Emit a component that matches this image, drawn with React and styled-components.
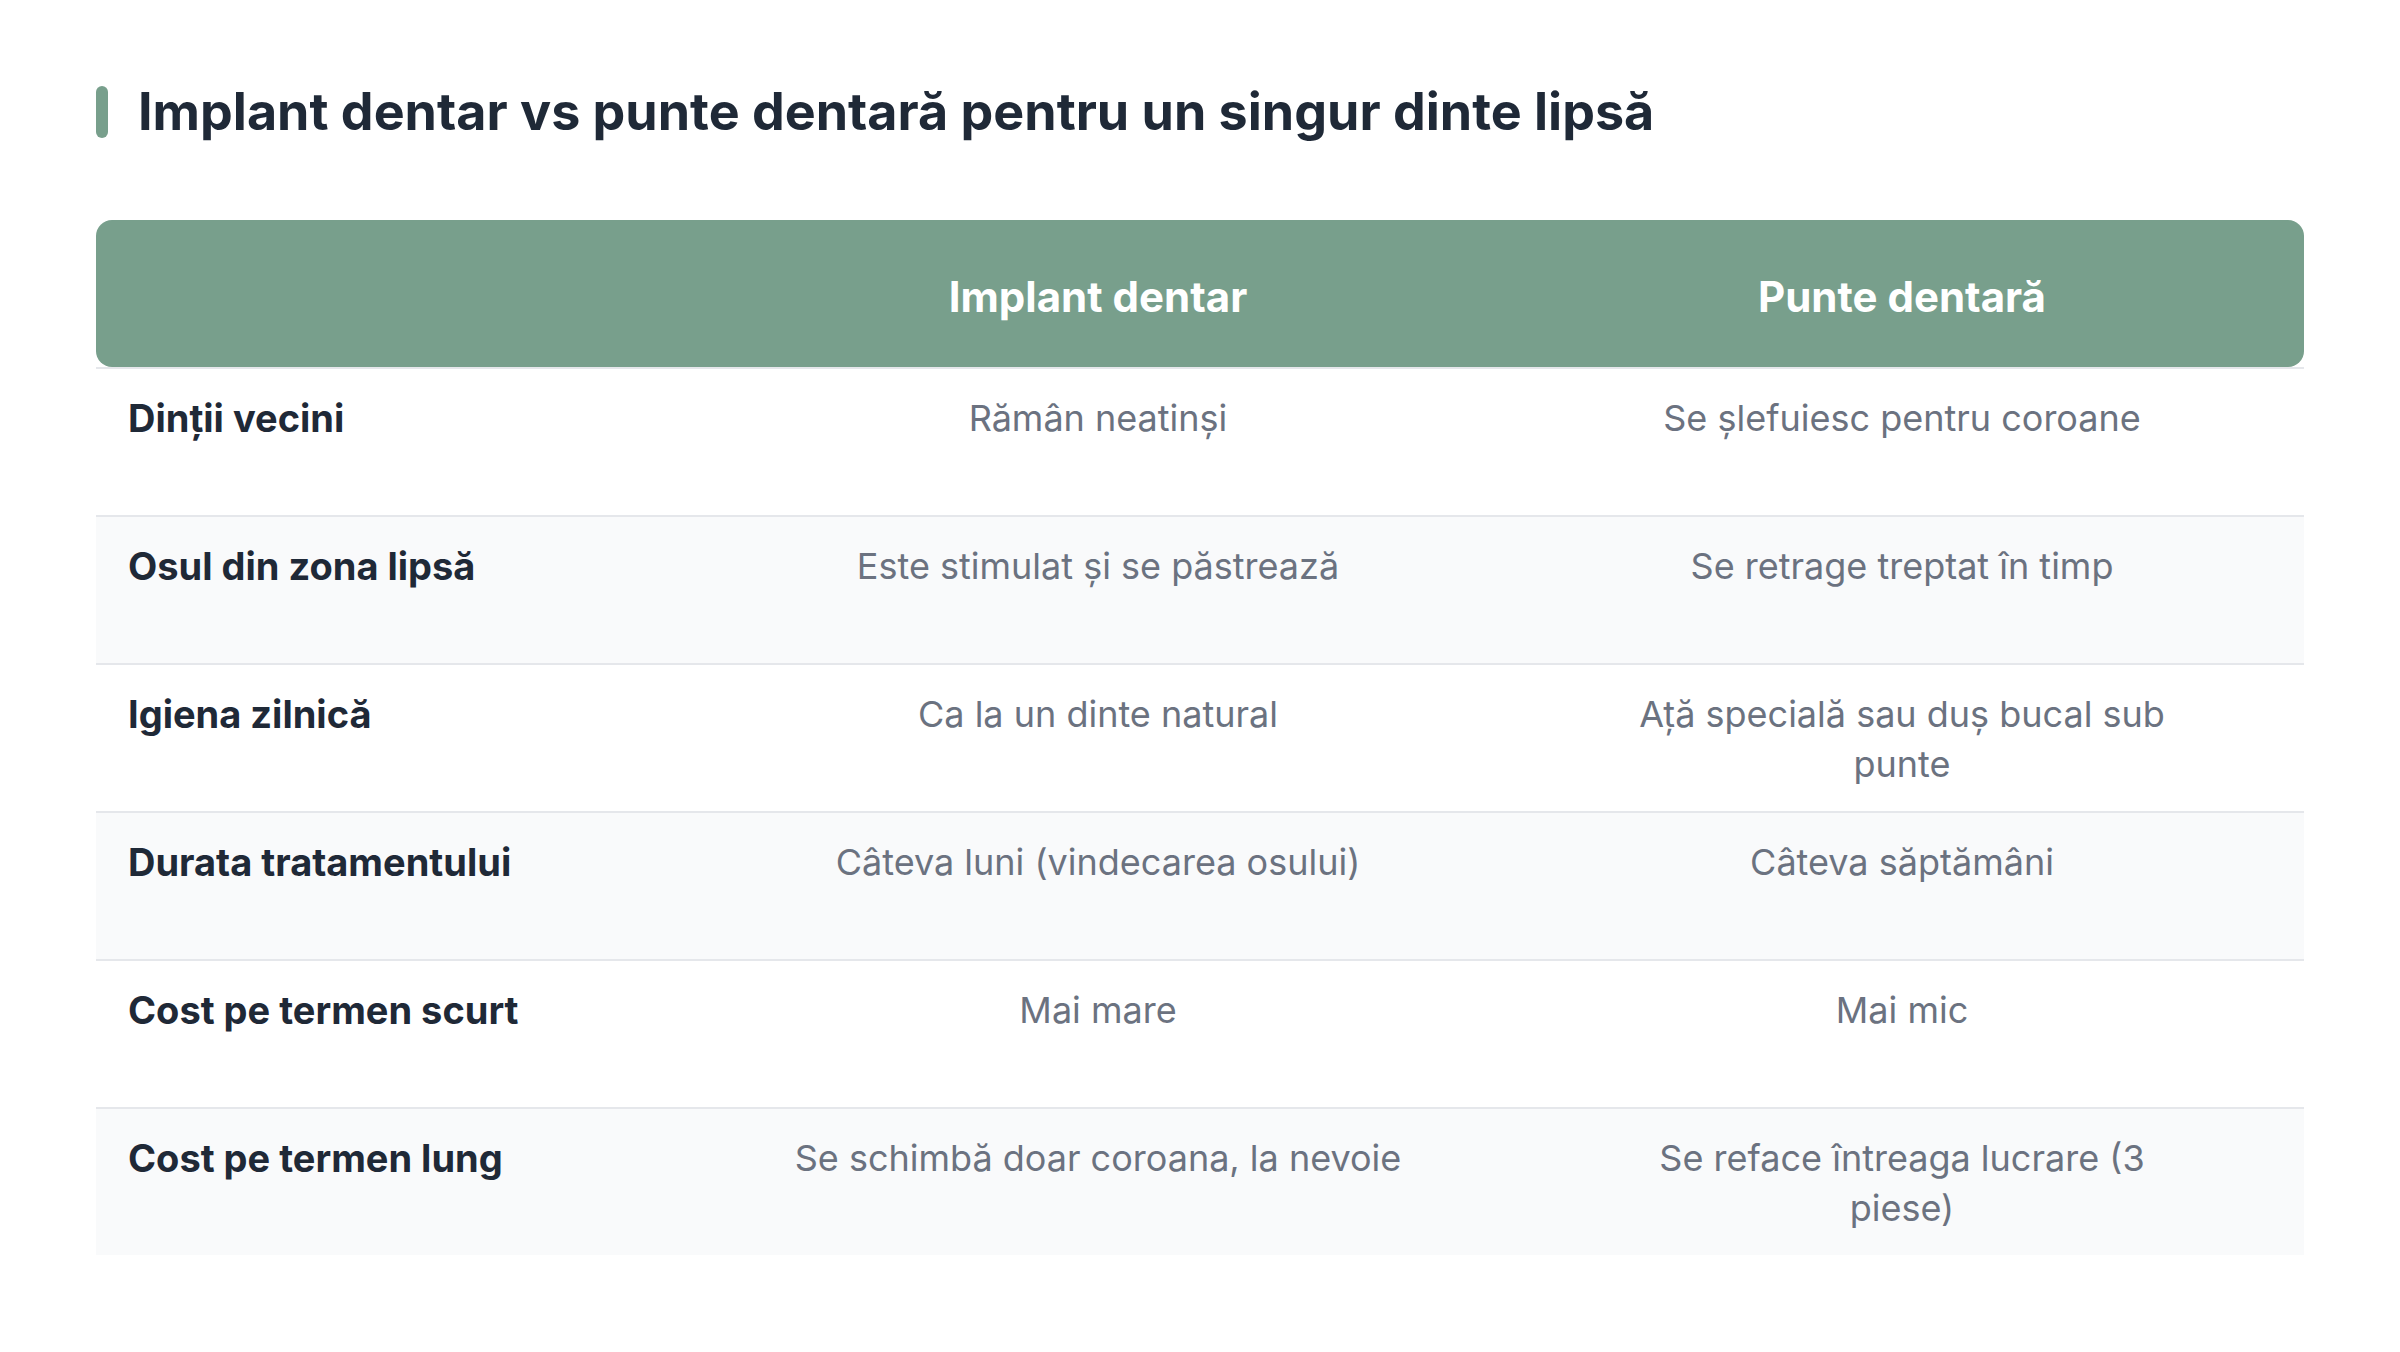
import React from 'react';
import styled, { createGlobalStyle } from 'styled-components';

const GlobalStyle = createGlobalStyle`
  body {
    margin: 0;
    background: #ffffff;
    font-family: Inter, "Noto Sans", "Liberation Sans", sans-serif;
  }
`;

const Page = styled.div`
  padding: 81px 96px 96px;
`;

const TitleRow = styled.div`
  display: flex;
  align-items: center;
  gap: 30px;
  margin-bottom: 77px;
`;

const Accent = styled.span`
  width: 12px;
  height: 52px;
  border-radius: 6px;
  background: #789f8c;
  flex-shrink: 0;
`;

const Title = styled.h1`
  margin: 0;
  font-size: 52px;
  line-height: 62px;
  font-weight: 700;
  color: #1f2937;
`;

const Table = styled.div`
  display: flex;
  flex-direction: column;
`;

const HeaderRow = styled.div`
  display: grid;
  grid-template-columns: 600px 1fr 1fr;
  align-items: center;
  height: 147px;
  background: #789f8c;
  border-radius: 16px;
`;

const HeaderCell = styled.div`
  padding: 5px 32px 0;
  text-align: center;
  font-size: 42px;
  font-weight: 700;
  color: #ffffff;
`;

const Row = styled.div`
  display: grid;
  grid-template-columns: 600px 1fr 1fr;
  min-height: 146px;
  border-top: 2px solid #e5e7eb;
  background: ${p => (p.$striped ? '#f9fafb' : '#ffffff')};
`;

const LabelCell = styled.div`
  padding: 24px 32px 22px;
  font-size: 38px;
  line-height: 50px;
  font-weight: 700;
  color: #1f2937;
`;

const ValueCell = styled.div`
  padding: 24px ${p => (p.$narrow ? '120px' : '32px')} 22px;
  font-size: 36px;
  line-height: 50px;
  text-align: center;
  color: #6b7280;
`;

const rows = [
  ['Dinții vecini', 'Rămân neatinși', 'Se șlefuiesc pentru coroane'],
  ['Osul din zona lipsă', 'Este stimulat și se păstrează', 'Se retrage treptat în timp'],
  ['Igiena zilnică', 'Ca la un dinte natural', 'Ață specială sau duș bucal sub punte'],
  ['Durata tratamentului', 'Câteva luni (vindecarea osului)', 'Câteva săptămâni'],
  ['Cost pe termen scurt', 'Mai mare', 'Mai mic'],
  ['Cost pe termen lung', 'Se schimbă doar coroana, la nevoie', 'Se reface întreaga lucrare (3 piese)'],
];

export default function App() {
  return (
    <Page>
      <GlobalStyle />
      <TitleRow>
        <Accent />
        <Title>Implant dentar vs punte dentară pentru un singur dinte lipsă</Title>
      </TitleRow>
      <Table>
        <HeaderRow>
          <HeaderCell />
          <HeaderCell>Implant dentar</HeaderCell>
          <HeaderCell>Punte dentară</HeaderCell>
        </HeaderRow>
        {rows.map(([label, implant, bridge], i) => (
          <Row key={label} $striped={i % 2 === 1}>
            <LabelCell>{label}</LabelCell>
            <ValueCell>{implant}</ValueCell>
            <ValueCell $narrow>{bridge}</ValueCell>
          </Row>
        ))}
      </Table>
    </Page>
  );
}
